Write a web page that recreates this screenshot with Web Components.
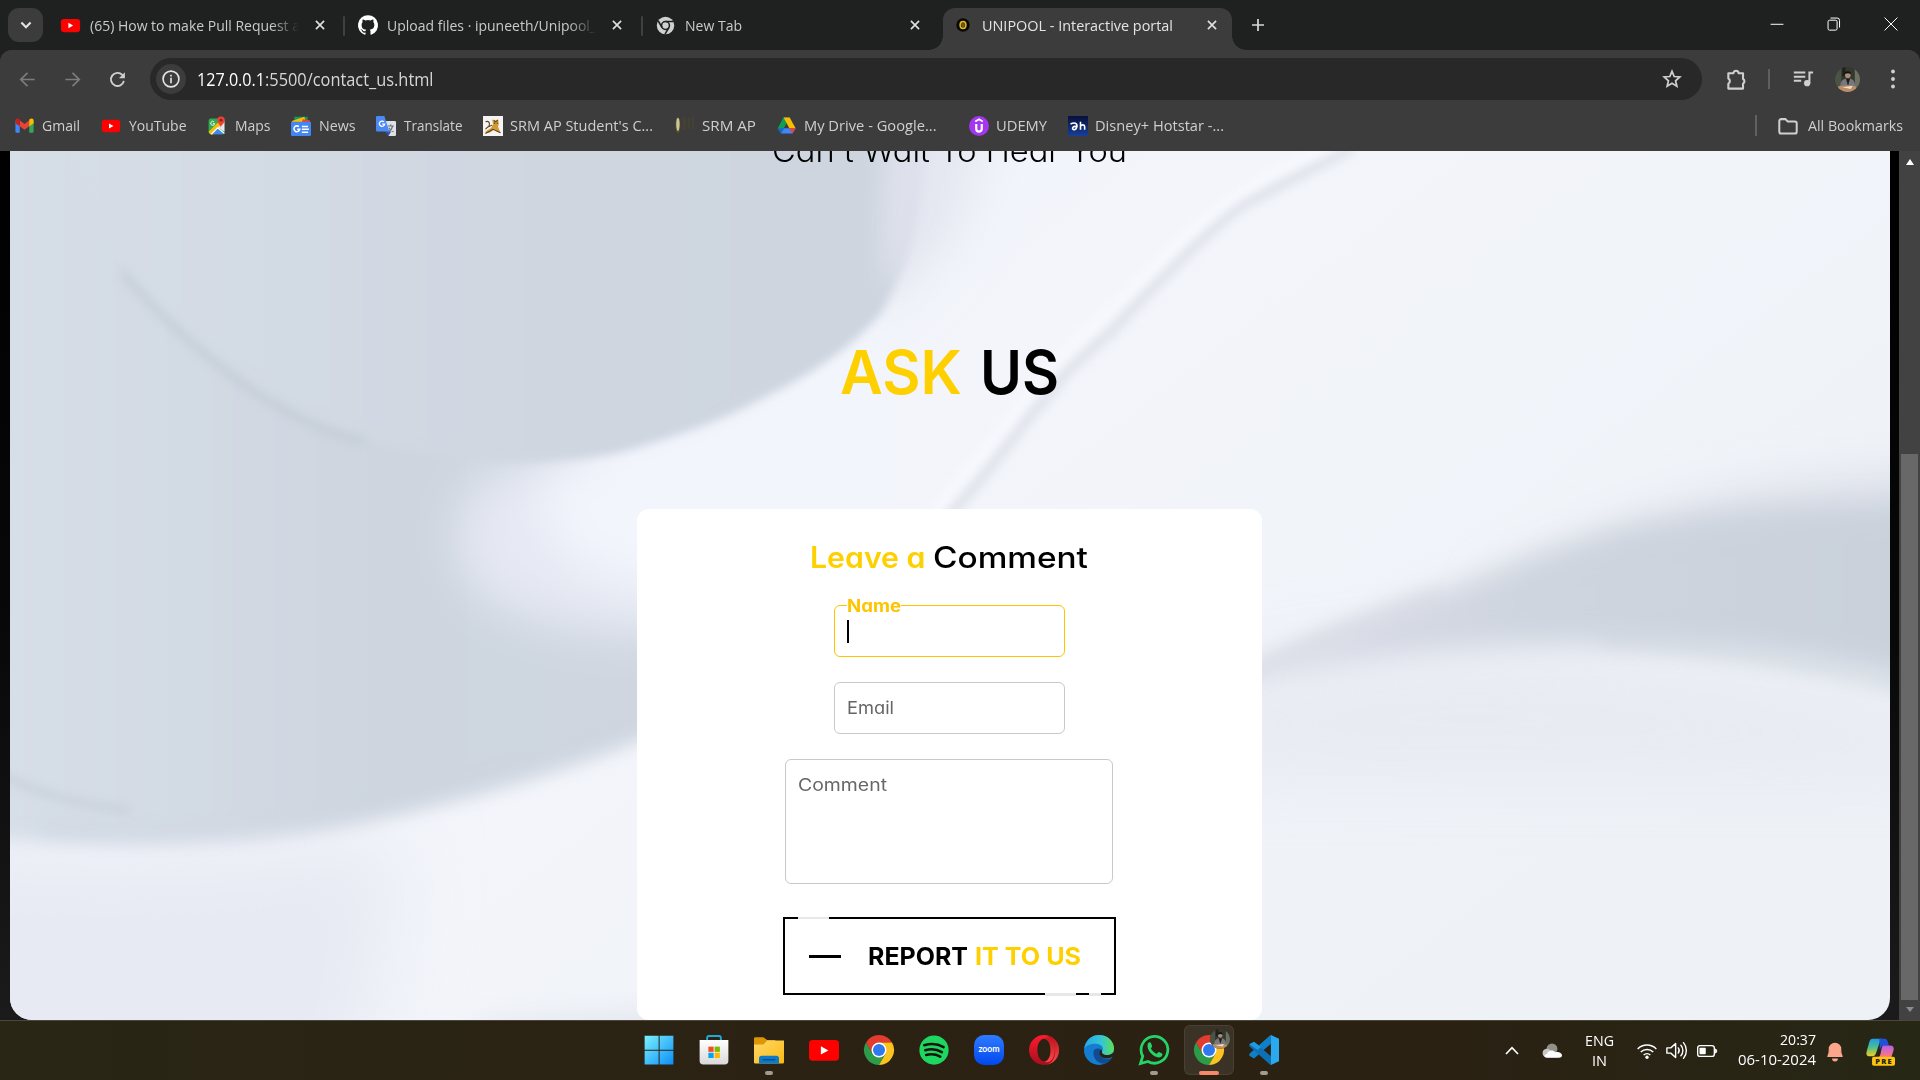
<!DOCTYPE html>
<html lang="en">
<head>
<meta charset="utf-8">
<title>UNIPOOL - Interactive portal</title>
<style>
html,body{margin:0;width:1920px;height:1080px;overflow:hidden;background:#000}
body{font-family:"Open Sans","Noto Sans",sans-serif}
</style>
</head>
<body>
<desktop-screen></desktop-screen>
<script>
const define=(name,html,init)=>customElements.define(name,class extends HTMLElement{
  connectedCallback(){
    if(this.shadowRoot)return;
    const r=this.attachShadow({mode:'open'});
    r.innerHTML=typeof html==='function'?html(this):html;
    if(init)init(this,r);
  }
});

/* Single line of text set to an exact advance width; cv11 is Inter's single-storey a */
define('fit-text',`<style>:host{display:block;white-space:nowrap;flex:none}span{display:inline-block;transform-origin:0 50%;font-feature-settings:"cv11"}</style><span><slot></slot></span>`,
(el,r)=>{
  const w=parseFloat(el.getAttribute('w'));el.style.width=w+'px';
  const s=r.querySelector('span'),n=s.getBoundingClientRect().width;
  if(n)s.style.transform='scaleX('+(w/n).toFixed(4)+')';
});

const ytIcon='<rect x="1" y="4.6" width="22" height="15" rx="3.6" fill="#f00"/><path d="M9.6 8.9v6.2l5.4-3.1z" fill="#fff"/>';
const chromeIcon='<path d="M12 6h10.4A12 12 0 0 0 1.6 6l5.2 9z" fill="#e33b2e"/><path d="M6.8 15 1.6 6A12 12 0 0 0 12 24l5.2-9z" fill="#2d9c4a"/><path d="M17.2 15 12 24A12 12 0 0 0 22.4 6H12z" fill="#fcc31e"/><circle cx="12" cy="12" r="6" fill="#fff"/><circle cx="12" cy="12" r="4.8" fill="#2f78ee"/>';
const portrait='<clipPath id="c"><circle cx="12" cy="12" r="12"/></clipPath><g clip-path="url(#c)"><rect width="24" height="24" fill="#34382f"/><path d="M0 0h6v24H0z" fill="#4b5346"/><path d="M19 0h5v24h-5z" fill="#6b7264"/><path d="M7 0h3v9H7z" fill="#1d211a"/><circle cx="12.3" cy="7.800" r="2.700" fill="#a98d76"/><path d="M9.200 7c0-4 6.300-4 6.300 0-2-1.300-4.500-1.300-6.300 0" fill="#12100d"/><path d="M5 19c0-6 3-8 7.500-8s6.500 2 7 8z" fill="#77777c"/><path d="m10.500 11 2 7 2-7z" fill="#1c1c1c"/><path d="M3 18.500c5-1 12-1 17 0l1 6H3z" fill="#b98d68"/><path d="M7 19.500 17 18l-2 3z" fill="#f0dcc4"/></g>';
const ICONS={
 youtube:ytIcon,chrome:chromeIcon,portrait,
 close:'<path d="m5 5 14 14M19 5 5 19" stroke="#dfe1e0" stroke-width="2.800"/>',
 plus:'<path d="M12 3v18M3 12h18" stroke="#d6d8d7" stroke-width="2.600"/>',
 down:'<path d="m6.500 9 5.500 5.600L17.500 9" stroke="#e3e3e3" stroke-width="2.600" fill="none"/>',
 github:'<path fill="#fff" d="M12 .3a12 12 0 0 0-3.800 23.400c.6.1.8-.3.8-.6v-2c-3.300.7-4-1.600-4-1.600-.6-1.400-1.400-1.800-1.400-1.800-1-.7.1-.7.1-.7 1.200 0 1.900 1.200 1.900 1.200 1 1.800 2.800 1.300 3.500 1 0-.8.4-1.300.7-1.600-2.700-.3-5.500-1.300-5.500-6 0-1.200.5-2.300 1.300-3.100-.2-.4-.6-1.600 0-3.200 0 0 1-.3 3.400 1.200a11.500 11.500 0 0 1 6 0c2.300-1.500 3.300-1.200 3.300-1.200.6 1.600.2 2.800 0 3.200.9.8 1.300 1.900 1.300 3.200 0 4.600-2.800 5.600-5.500 5.900.5.4.9 1 .9 2.200v3.300c0 .3.1.7.8.6A12 12 0 0 0 12 .3"/>',
 chromegray:'<circle cx="12" cy="12" r="11" fill="#cfd1d0"/><circle cx="12" cy="12" r="5" fill="none" stroke="#1f2120" stroke-width="2"/><path d="M12 7h10M7.700 14.600 2.700 6M16.300 14.600 11.400 23" stroke="#1f2120" stroke-width="2"/>',
 unipool:'<circle cx="12" cy="12" r="11.500" fill="#090907"/><ellipse cx="12" cy="12" rx="5" ry="6" fill="#3b320c" stroke="#e9b921" stroke-width="2.600"/><path d="M10.500 9v4c0 2 3 2 3 0V9" stroke="#d7ac27" fill="none"/>',
 back:'<path d="M21 12H4M12 3.500 3.500 12l8.500 8.500" stroke="#7c7c7c" stroke-width="2.200" fill="none"/>',
 forward:'<path d="M3 12h17M12 3.500l8.500 8.500-8.500 8.500" stroke="#7c7c7c" stroke-width="2.200" fill="none"/>',
 reload:'<path d="M19.300 13.600A7.500 7.500 0 1 1 17.500 6.800l1.800 2" stroke="#cfcfcf" stroke-width="2.200" fill="none"/><path d="M20.400 3.800v6.700h-6.700z" fill="#cfcfcf"/>',
 info:'<circle cx="12" cy="12" r="9.500" stroke="#e3e3e3" stroke-width="2" fill="none"/><path d="M12 10.500v6.500M12 6.800v2.200" stroke="#e3e3e3" stroke-width="2"/>',
 star:'<path d="m12 3.600 2.400 5.700 6.100.5-4.600 4.100 1.400 6L12 16.700l-5.300 3.200 1.400-6-4.600-4.100 6.100-.5z" stroke="#cfcfcf" stroke-width="1.900" fill="none"/>',
 ext:'<path d="M3.500 5.500h5.300a2.700 2.700 0 0 1 5.400 0h4.600v6a2.700 2.700 0 0 1 0 4.800v5.200H3.500v-5.200a3 3 0 0 0 0-5.300z" stroke="#cfcfcf" stroke-width="2.200" fill="none" stroke-linejoin="round"/>',
 music:'<path d="M2 5h12.500M2 9.500h12.500M2 14h8" stroke="#cfcfcf" stroke-width="2.200"/><circle cx="16.500" cy="16.500" r="3.400" fill="#cfcfcf"/><path d="M19 17V5h4" stroke="#cfcfcf" stroke-width="2.200" fill="none"/>',
 dots:'<circle cx="12" cy="3.800" r="2.100" fill="#cfcfcf"/><circle cx="12" cy="12" r="2.100" fill="#cfcfcf"/><circle cx="12" cy="20.200" r="2.100" fill="#cfcfcf"/>',
 min:'<path d="M1 12.500h22" stroke="#fff" stroke-width="1.700"/>',
 restore:'<rect x="1.800" y="5.500" width="15.500" height="17" rx="2.500" stroke="#fff" stroke-width="1.700" fill="none"/><path d="M6 1.800h11.500a4 4 0 0 1 4 4V18" stroke="#fff" stroke-width="1.700" fill="none"/>',
 winclose:'<path d="m1 1 22 22M23 1 1 23" stroke="#fff" stroke-width="1.700"/>',
 folder:'<path d="M2.500 6.500a2 2 0 0 1 2-2h4.700l2.500 2.700h7.800a2 2 0 0 1 2 2v9a2 2 0 0 1-2 2h-15a2 2 0 0 1-2-2z" stroke="#cfcfcf" stroke-width="2.200" fill="none"/>',
 gmail:'<path d="M.5 6v13.500A1.500 1.500 0 0 0 2 21h4V11z" fill="#4285f4"/><path d="M23.500 6v13.500A1.500 1.500 0 0 1 22 21h-4V11z" fill="#34a853"/><path d="M6 5.500 12 10l6-4.500V13l-6 4.500L6 13z" fill="#ea4335"/><path d="M.5 6c0-3 3-3.500 5.500-1.500V13L.5 9z" fill="#c5221f"/><path d="M23.500 6c0-3-3-3.500-5.500-1.500V13l5.500-4z" fill="#fbbc04"/>',
 maps:'<rect x="2" y="3" width="20" height="20" rx="3" fill="#34a853"/><path d="m2 20 16-16 4 4L8 23H4z" fill="#fbbc04"/><path d="m12.500 15.500 9 7.500H5z" fill="#4285f4"/><path d="m14 14.500 8-8V20z" fill="#e6e8ec"/><path d="m5.500 23 8-8 8.500 7" stroke="#fff" stroke-width="1.500" fill="none"/><path d="M9 7.500a2.500 2.500 0 1 0 .7 2H7.500" stroke="#fff" stroke-width="1.100" fill="none"/><path d="M17.500 15c0-4-4.500-5-4.500-9.500a4.500 4.500 0 0 1 9.500 0c0 4.500-5 5.500-5 9.500z" fill="#ea4335"/><circle cx="17.700" cy="5.300" r="1.800" fill="#8c1d18"/>',
 news:'<path d="M4 1h16v9H4z" fill="#0f9d58"/><path d="m1 6 15-5 3 10H2z" fill="#fbbc04"/><path d="M14 4 22.500 5v8H12z" fill="#ea4335"/><rect y="7" width="24" height="17" rx="1.500" fill="#4285f4"/><path d="M9.500 12.800a3.500 3.500 0 1 0 1 3.200H7.500" stroke="#fff" stroke-width="1.900" fill="none"/><path d="M13 12.500h7.500M13 16h8.500M13 19.500h7.500" stroke="#fff" stroke-width="1.800"/>',
 translate:'<path d="M9 6h13.500A1.500 1.500 0 0 1 24 7.500v15a1.500 1.500 0 0 1-1.500 1.500H15z" fill="#dfe1e5"/><path d="M14 12h7.500M17.700 10v2M20 12c-1 4-3 6-5 7M15.500 14c1 2 3 4 5.500 5" stroke="#667584" stroke-width="1.300" fill="none"/><path d="m10 17 5 7 3-5z" fill="#3451b5"/><path d="M1.500 0H10l6 18.500H1.500A1.500 1.500 0 0 1 0 17V1.500A1.500 1.500 0 0 1 1.500 0" fill="#4b8af5"/><path d="M9.500 7a3.200 3.200 0 1 0 .9 2.800H7.500" stroke="#fff" stroke-width="1.600" fill="none"/>',
 srm:'<rect width="24" height="24" fill="#f5f4f2"/><path d="M2 20c2-3 5-4 8-6l2-4-1-6 3 2 4-2 1 5-1 4 3 7-4-1-3-3-6 4z" fill="#d49b35"/><path d="M3 7c4-2 6 2 4 5M3 16c3-5 5-3 8-5M3 21l9-5 9 4M13 5l2 2 3-2" stroke="#594021" fill="none" stroke-width="1.300"/><circle cx="14" cy="8.500" r=".8" fill="#3b2a14"/><circle cx="17" cy="8.500" r=".8" fill="#3b2a14"/>',
 srmap:'<ellipse cx="3.500" cy="11" rx="3" ry="9.500" fill="#56502f"/><ellipse cx="3.500" cy="10" rx="2" ry="8" fill="#cdc797"/><path d="M9 1h4v16H9zM15 2h3v14h-3zM20 1h3v15h-3z" fill="#444232"/>',
 drive:'<path d="M8 2h8l-4.500 8L5 22 1 15.500z" fill="#0f9d58"/><path d="M8.300 2H16l7.500 13.500h-8z" fill="#fbbc04"/><path d="M8.800 15.500h14.700L19.500 22H5z" fill="#4285f4"/><path d="M1 15.500h7.800L5 22z" fill="#1967d2"/><path d="m15.500 15.500 8 0-4 6.500z" fill="#ea4335"/>',
 udemy:'<circle cx="12" cy="12" r="12" fill="#a435f0"/><path d="M7.500 6.700 12 4l4.500 2.700" stroke="#fff" stroke-width="2.200" fill="none"/><path d="M8.700 9.500v6.200c0 4 6.600 4 6.600 0V9.500" stroke="#fff" stroke-width="2.700" fill="none"/>',
 hotstar:'<linearGradient id="g" x2="0" y2="1"><stop stop-color="#07103a"/><stop offset="1" stop-color="#183f98"/></linearGradient><rect width="24" height="24" fill="url(#g)"/><path d="M3 9.500c7-3 9 1 7 5s-6 1-4-1 5 0 5 0M15 7v9.500M15 12.500c1-2.500 5-2.500 5 .5v3.500" stroke="#fff" stroke-width="1.900" fill="none"/>',
 windows:'<linearGradient id="g" x1="0" y1="0" x2="24" y2="24" gradientUnits="userSpaceOnUse"><stop stop-color="#7df3fd"/><stop offset="1" stop-color="#0a8cf7"/></linearGradient><path d="M.5.5h11.200v11.200H.5zM12.500.5h11v11.200h-11zM.5 12.500h11.200v11H.5zM12.500 12.500h11v11h-11z" fill="url(#g)"/>',
 store:'<path d="M6.500 5V2.500C6.500 1.200 7 .8 8 .8h8c1 0 1.500.4 1.500 1.700V5" stroke="#21a9dd" stroke-width="1.500" fill="none"/><linearGradient id="g" x2="0" y2="1"><stop stop-color="#fff"/><stop offset="1" stop-color="#d9d9db"/></linearGradient><path d="M.5 4h23v16.500a3 3 0 0 1-3 3h-17a3 3 0 0 1-3-3z" fill="url(#g)"/><path d="M7.500 9.300h4.200v4.200H7.500z" fill="#f25022"/><path d="M12.500 9.300h4.200v4.200h-4.200z" fill="#7fba00"/><path d="M7.500 14.200h4.200v4.200H7.500z" fill="#00a4ef"/><path d="M12.500 14.200h4.200v4.200h-4.200z" fill="#ffb900"/>',
 explorer:'<linearGradient id="g" x2="1" y2="1"><stop stop-color="#ffd96b"/><stop offset="1" stop-color="#fbb90f"/></linearGradient><path d="M0 2.800a1 1 0 0 1 1-1h6.500L10.500 4H17v4H0z" fill="#dc9606"/><path d="M0 7.500h7.500L10.500 4.300H24V21.800a1 1 0 0 1-1 1H1a1 1 0 0 1-1-1z" fill="url(#g)"/><path d="M4 22.800v-4a2.200 2.200 0 0 1 2.200-2.200h11.600a2.200 2.200 0 0 1 2.200 2.200v4z" fill="#0c79cb"/><path d="M7 19.800h10" stroke="#06498a" stroke-width="1"/>',
 youtube2:'<rect x="0" y="4" width="24" height="16.500" rx="3" fill="#f00"/><path d="M9.500 8.900v6.700l6-3.300z" fill="#fff"/>',
 spotify:'<circle cx="12" cy="12" r="11.700" fill="#1ed760"/><path d="M4.200 8.200c5-1.500 11.200-1 15.500 1.500M5 12.200c4.500-1.300 9.500-.7 13.300 1.500M5.700 16c4-1 8-.5 11.300 1.300" stroke="#17130c" stroke-width="2" stroke-linecap="round" fill="none"/>',
 zoom:'<linearGradient id="g" x2="0" y2="1"><stop stop-color="#2f7bff"/><stop offset="1" stop-color="#0048ef"/></linearGradient><rect width="24" height="24" rx="8" fill="url(#g)"/><text x="12" y="13.900" text-anchor="middle" font-family="Lato" font-weight="700" font-size="6.800" textLength="17" lengthAdjust="spacingAndGlyphs" fill="#fff">zoom</text>',
 opera:'<linearGradient id="g" x2="0" y2="1"><stop stop-color="#ff1b2d"/><stop offset="1" stop-color="#a70e1c"/></linearGradient><linearGradient id="h" x2="0" y2="1"><stop stop-color="#b5101c"/><stop offset="1" stop-color="#ff5050"/></linearGradient><path fill="url(#g)" fill-rule="evenodd" d="M12 0a12 12 0 1 0 0 24 12 12 0 0 0 0-24m0 3c3 0 5.300 4 5.300 9s-2.300 9-5.300 9-5.300-4-5.300-9S9 3 12 3"/><path d="M12.500 2.500C16 1 20.500 4.500 20.500 12S16 23 12.500 21.500c3-.5 4.800-4.500 4.800-9.500s-1.800-9-4.800-9.500M20 3a12 12 0 0 1 0 18c-1.500 1.500-4 2.500-6 2.500 6-1 7-7 7-11.500S19.500 4 14 .5c2 0 4.500 1 6 2.500" fill="url(#h)"/>',
 edge:'<linearGradient id="g" x2="1"><stop stop-color="#2aa7e6"/><stop offset=".6" stop-color="#35c7d0"/><stop offset="1" stop-color="#61e052"/></linearGradient><circle cx="12" cy="12" r="12" fill="#157cd0"/><path d="M.2 11C1.500 3.500 6.500 0 12 0c7 0 12 5 12 10.500 0 4-3 5.500-6 5.500-3.500 0-4.500-1.600-3.500-3 2-3-1-6-5-6C5 7 1.500 8.500.2 11" fill="url(#g)"/><path d="M7.500 14c0 5.500 4 9 9 9 2.500-.8 4.500-2.800 5.600-4.600-4.500 2-9.100 0-9.500-3.900-.1-2 1-2.500 1.200-3-3-1.500-6.300-.5-6.300 2.500" fill="#114b91"/><path d="M13.800 11.500c-1.500 1-2.200 3-.3 5.500 1.800 2 5.800 2.200 9.300.3l1.700-1V13l-1.500 1.500C20.500 16.500 16.500 16.300 15 15c-.8-.8-.9-1.400-.5-2z" fill="#2a2113"/>',
 whatsapp:'<path d="M1.200 22.800 3 17A10.700 10.700 0 1 1 7.200 21.200z" fill="none" stroke="#25d366" stroke-width="2.200"/><path d="M7 7c1-1.800 2.200-1.500 2.700-.2l.8 1.900c.3 1-1.300 1.500-.9 2.300 1 1.800 2.300 3 4.300 3.900.8.300 1.400-1.600 2.200-1.300l2.300 1.100c.8.500.2 2-.7 2.700-3.700 2.400-12.400-4.200-10.700-10.400" fill="#25d366"/>',
 vscode:'<path d="M17.500 0v7L4 18.700.3 16.600V15L17 .2z" fill="#0f80c8"/><path d="M17.500 24v-7L4 5.300.3 7.400V9L17 23.800z" fill="#0d6fb4"/><path d="m.3 7.400 3.700-2 5.500 4.200L7 12z" fill="#1f9ae0"/><path d="M17.500 0 24 3v18l-6.500 3z" fill="#2aa9ef"/>',
 caret:'<path d="m4 16 8-8.500 8 8.500" stroke="#fff" stroke-width="2.200" fill="none"/>',
 cloud:'<circle cx="12" cy="9.500" r="6.500" fill="#919089"/><path d="M5 19.500a5 5 0 0 1-.5-9.800c3-1 5 .3 6.500 3l8 6.800z" fill="#c6c6c3"/><path d="M6 20c-4 0-4-4 0-4.500 1-4.500 7-5.500 10-2 4-.7 8 1 8 4 0 2-2 2.500-3.500 2.500z" fill="#fff"/>',
 wifi:'<path d="M.8 9.500a16 16 0 0 1 22.400 0M4.500 13.200a10.700 10.700 0 0 1 15 0M8 16.800a5.800 5.800 0 0 1 8 0" stroke="#fff" stroke-width="1.800" fill="none"/><circle cx="12" cy="19.500" r="2" fill="#fff"/>',
 speaker:'<path d="M1 9h4.500l5.500-5v16l-5.500-5H1z" stroke="#fff" stroke-width="1.600" fill="none" stroke-linejoin="round"/><path d="M14 9a5 5 0 0 1 0 6M17 6a9 9 0 0 1 0 12M20 3a14 14 0 0 1 0 18" stroke="#fff" stroke-width="1.600" fill="none" stroke-linecap="round"/>',
 battery:'<rect x=".8" y="5.500" width="20" height="13" rx="3" stroke="#fff" stroke-width="1.600" fill="none"/><rect x="3" y="8" width="7.500" height="8" rx="1" fill="#fff"/><path d="M22 9.500c2.300.3 2.300 4.700 0 5z" fill="#fff" stroke="#fff"/>',
 bell:'<path d="M3.500 18.500c2-3 1.700-6 1.700-9a6.800 6.800 0 0 1 13.600 0c0 3-.3 6 1.700 9z" fill="#fca68b" stroke="#fca68b" stroke-width="1.500" stroke-linejoin="round"/><path d="M8.500 21h7a3.500 3.500 0 0 1-7 0" fill="#fca68b"/>',
 copilot:'<linearGradient id="a" x2="0" y2="1"><stop stop-color="#1d9bea"/><stop offset=".5" stop-color="#4fbf8c"/><stop offset="1" stop-color="#f5cf21"/></linearGradient><linearGradient id="b" x2="0" y2="1"><stop stop-color="#b85cf5"/><stop offset="1" stop-color="#ff7b72"/></linearGradient><path d="M5.500 1.500h8c-2 1.500-2.500 4-4 8.500s-2 6-4.500 6H3C0 16 0 13.500.8 11l2-7c.5-1.500 1.200-2.500 2.700-2.500" fill="url(#a)"/><path d="M11 1.500h4.500c2 0 2.500 2 3.500 5.500h-4c-2 0-2.500 1-3.500 4z" fill="#1f52d8"/><path d="M14.500 7H20c3 0 3.500 2.500 2.500 5l-1.500 4.500h-11c2 0 2-3 2.700-6 .5-2 .8-3.500 1.800-3.500" fill="url(#b)"/><rect x="5" y="16.300" width="19" height="7.500" rx="1.500" fill="#fdc50c"/><text x="14.500" y="22.300" text-anchor="middle" font-family="Open Sans" font-weight="800" font-size="6.200" textLength="13.500" fill="#222">PRE</text>'
};
define('app-icon',el=>{
  const s=el.getAttribute('size')||20;
  return `<style>:host{display:block;flex:none;width:${s}px;height:${s}px}svg{display:block;overflow:visible}</style><svg width="${s}" height="${s}" viewBox="0 0 24 24" fill="none">${ICONS[el.getAttribute('name')]}</svg>`;
});

define('browser-tab',`<style>
:host{display:flex;align-items:center;box-sizing:border-box;width:297.5px;height:42px;padding-left:12px;flex:none;position:relative;color:#c9cac9;font-size:15px;line-height:34px}
.ic{width:21px;display:flex;justify-content:center;margin-right:9px}
.t{width:211px;overflow:hidden;margin-right:12px}
:host([fade]) .t{-webkit-mask-image:linear-gradient(90deg,#000 86%,transparent 99%)}
:host([sep])::after{content:"";position:absolute;right:0;top:8px;width:2px;height:20px;background:#3f4040;border-radius:1px}
:host([active]) {color:#e4e4e4}
.bg{display:none}
:host([active]) .bg{display:block;position:absolute;left:3px;right:5.500px;top:0;bottom:0;background:#3c3c3c;border-radius:12px 12px 0 0}
:host([active]) .bg::before,:host([active]) .bg::after{content:"";position:absolute;bottom:0;width:14px;height:14px}
.bg::before{left:-14px;background:radial-gradient(circle at 0 0,transparent 13.500px,#3c3c3c 14px)}
.bg::after{right:-14px;background:radial-gradient(circle at 100% 0,transparent 13.500px,#3c3c3c 14px)}
.ic,.t,app-icon{position:relative;top:-4px}
</style><div class="bg"></div><div class="ic"><slot name="icon"></slot></div><div class="t"><slot></slot></div><app-icon name="close" size="14"></app-icon>`);

define('tab-strip',`<style>
:host{display:flex;height:50px;background:#1f2120;padding-top:8px;box-sizing:border-box}
.search{width:35px;height:34px;border-radius:11px;background:#3c3c3c;margin:0 4.500px 0 8px;display:flex;align-items:center;justify-content:center}
.plus{margin:9px 0 0 12px}
.win{margin-left:auto;display:flex;gap:43px;padding:9px 22px 0 0}
</style>
<div class="search"><app-icon name="down" size="20"></app-icon></div>
<browser-tab fade sep><app-icon slot="icon" name="youtube" size="21"></app-icon><fit-text w="210">(65) How to make Pull Request a</fit-text></browser-tab>
<browser-tab fade sep><app-icon slot="icon" name="github" size="20"></app-icon><fit-text w="209">Upload files · ipuneeth/Unipool_</fit-text></browser-tab>
<browser-tab><app-icon slot="icon" name="chromegray" size="19"></app-icon><fit-text w="57">New Tab</fit-text></browser-tab>
<browser-tab active><app-icon slot="icon" name="unipool" size="14"></app-icon><fit-text w="191">UNIPOOL - Interactive portal</fit-text></browser-tab>
<app-icon class="plus" name="plus" size="16"></app-icon>
<div class="win"><app-icon name="min" size="14"></app-icon><app-icon name="restore" size="14"></app-icon><app-icon name="winclose" size="14"></app-icon></div>`);

define('address-bar',`<style>
:host{display:flex;align-items:center;height:58px;background:#3c3c3c;box-sizing:border-box;padding-left:18px}
.nav{display:flex;align-items:center;gap:25.500px;width:132px}
.omni{width:1552px;height:42px;border-radius:21px;background:#282828;display:flex;align-items:center;box-sizing:border-box;padding:0 19px 0 6px;font-size:18px;color:#d6d6d6}
.info{width:30px;height:30px;border-radius:50%;background:#3c3c3c;display:flex;align-items:center;justify-content:center;margin-right:11px}
.omni app-icon.star{margin-left:auto}
.host{color:#fff}
.ext{margin-left:23px}.sep{width:2px;height:20px;background:#5f5f5f;margin:0 22px 0 20px}
.pic{margin:0 21.500px 0 21px}
</style>
<div class="nav"><app-icon name="back" size="19"></app-icon><app-icon name="forward" size="19"></app-icon><app-icon name="reload" size="21"></app-icon></div>
<div class="omni"><div class="info"><app-icon name="info" size="20"></app-icon></div><fit-text class="host" w="68">127.0.0.1</fit-text><fit-text w="168.500">:5500/contact_us.html</fit-text><app-icon class="star" name="star" size="22"></app-icon></div>
<app-icon class="ext" name="ext" size="23"></app-icon><div class="sep"></div><app-icon name="music" size="22"></app-icon><app-icon class="pic" name="portrait" size="25"></app-icon><app-icon name="dots" size="22"></app-icon>`);

define('bookmark-item',el=>`<style>
:host{display:flex;align-items:center;flex:none;width:${el.getAttribute('span')}px}
app-icon{margin-right:${el.getAttribute('gap')||7}px}
fit-text{padding-bottom:2px}
</style><app-icon name="${el.getAttribute('icon')}" size="${el.getAttribute('size')||20}"></app-icon><fit-text w="${el.getAttribute('w')}"><slot></slot></fit-text>`);

define('bookmark-bar',`<style>
:host{display:flex;height:43px;padding:0 0 8px 15px;box-sizing:border-box;align-items:center;background:#3c3c3c;color:#cfcfcf;font-size:15px;line-height:24px}
.sep{width:2px;height:21px;background:#616161;margin:0 20px 0 auto}
.all{margin-right:17px}
</style>
<bookmark-item icon="gmail" size="19" gap="8" w="38" span="86">Gmail</bookmark-item>
<bookmark-item icon="youtube" gap="7.500" w="57.500" span="106">YouTube</bookmark-item>
<bookmark-item icon="maps" size="19" gap="8.500" w="35.500" span="84">Maps</bookmark-item>
<bookmark-item icon="news" gap="8" w="36.500" span="85">News</bookmark-item>
<bookmark-item icon="translate" gap="7.500" w="58.500" span="107">Translate</bookmark-item>
<bookmark-item icon="srm" w="143" span="192">SRM AP Student's C...</bookmark-item>
<bookmark-item icon="srmap" w="54" span="102">SRM AP</bookmark-item>
<bookmark-item icon="drive" size="19" gap="7.500" w="132.500" span="192">My Drive - Google...</bookmark-item>
<bookmark-item icon="udemy" w="51" span="99">UDEMY</bookmark-item>
<bookmark-item icon="hotstar" w="129" span="160">Disney+ Hotstar -...</bookmark-item>
<div class="sep"></div>
<bookmark-item class="all" icon="folder" size="22" gap="9" w="95" span="126">All Bookmarks</bookmark-item>`);

/* Soft folded-paper backdrop */
define('wave-backdrop',`<style>:host{display:block;width:1880px;height:869px}svg{display:block}</style>
<svg width="1880" height="869" viewBox="10 151 1880 869">
<defs>
<filter id="f4" x="-20%" y="-20%" width="140%" height="140%"><feGaussianBlur stdDeviation="5"/></filter>
<filter id="f8" x="-20%" y="-20%" width="140%" height="140%"><feGaussianBlur stdDeviation="9"/></filter>
<filter id="f14" x="-30%" y="-30%" width="160%" height="160%"><feGaussianBlur stdDeviation="14"/></filter>
<filter id="f22" x="-50%" y="-50%" width="200%" height="200%"><feGaussianBlur stdDeviation="24"/></filter>
<filter id="f40" x="-60%" y="-60%" width="220%" height="220%"><feGaussianBlur stdDeviation="40"/></filter>
<linearGradient id="l1" gradientUnits="userSpaceOnUse" x1="10" y1="0" x2="930" y2="0"><stop stop-color="#d6dee7"/><stop offset=".5" stop-color="#d0d7e1"/><stop offset="1" stop-color="#cdd4de"/></linearGradient>
<linearGradient id="l2" gradientUnits="userSpaceOnUse" x1="10" y1="0" x2="640" y2="0"><stop stop-color="#d6dee7"/><stop offset=".6" stop-color="#ced5df"/><stop offset="1" stop-color="#cfd6e0"/></linearGradient>
<linearGradient id="w" x1="0" x2="1"><stop stop-color="#dcdde8"/><stop offset=".4" stop-color="#cfd5df"/><stop offset="1" stop-color="#c8d0da"/></linearGradient>
<linearGradient id="bg" x1="0" y1="0" x2="1" y2=".6"><stop stop-color="#eef1fa"/><stop offset=".5" stop-color="#f3f5fb"/><stop offset="1" stop-color="#eef2f7"/></linearGradient>
</defs>
<rect x="10" y="151" width="1880" height="869" fill="url(#bg)"/>
<path d="M-100 850C100 880 250 860 400 840L350 1100-100 1100z" fill="#e7e9f3" filter="url(#f40)"/>
<path d="M480 1022 700 1008 700 1060 480 1060z" fill="#e4e6ee" filter="url(#f14)"/>
<path d="M880 60 1010 60 960 230 850 350 880 300z" fill="#e5e8f1" filter="url(#f22)"/>
<path d="M-60 60H400L560 455 680 520 680 720C600 757 480 795 367 819 270 840 120 850-60 836z" fill="url(#l2)" filter="url(#f8)"/>
<path d="M490 475 800 380 800 635C680 640 540 635 490 600 445 570 450 500 490 475z" fill="#e6e9f3" filter="url(#f22)"/>
<path d="M560 468 800 400 800 590C700 600 620 590 575 560 540 530 530 495 560 468z" fill="#f3f5fd" filter="url(#f22)"/>
<path d="M600 462 700 430 880 320 880 530 640 530z" fill="#f3f5fd" filter="url(#f14)"/>
<path d="M60 60H925C925 200 915 255 882 312 850 350 810 375 765 397 720 422 680 434 643 446 600 460 560 462 527 462 490 462 455 458 420 452 340 438 280 405 233 370 180 330 140 295 115 255 80 200 60 130 60 60z" fill="url(#l1)" filter="url(#f4)"/>
<path d="M890 40h50C940 190 925 250 890 295 872 240 890 150 890 40z" fill="#e3e5ef" opacity=".8" filter="url(#f14)"/>
<path d="M122 272C170 330 230 375 260 396 300 420 330 435 365 441" stroke="#bec7d1" stroke-width="8" opacity=".6" fill="none" filter="url(#f4)"/>
<path d="M0 774C40 795 80 805 130 810" stroke="#c2cbd5" stroke-width="8" opacity=".6" fill="none" filter="url(#f4)"/>
<path d="M40 828C150 842 270 838 367 815 450 798 560 768 650 728" stroke="#c9d0db" stroke-width="12" opacity=".45" fill="none" filter="url(#f8)"/>
<path d="M1352 148C1300 175 1260 195 1236 209 1205 235 1190 250 1174 266 1150 290 1130 310 1113 330 1090 350 1078 360 1064 375 1045 400 1030 415 1021 427 1000 455 985 475 945 520" stroke="#e2e4ed" stroke-width="12" fill="none" filter="url(#f4)"/>
<path d="M1335 144C1270 170 1220 200 1160 262L1050 368 1006 425 932 515" stroke="#f9faff" stroke-width="9" opacity=".8" fill="none" filter="url(#f4)"/>
<path d="M1200 690C1340 650 1500 650 1640 665 1760 680 1850 700 1980 735L1980 780 1200 780z" fill="#e5e7f0" opacity=".75" filter="url(#f40)"/>
<path d="M1480 600C1640 500 1780 482 1980 470L1980 580z" fill="#d9dde6" filter="url(#f22)"/>
<path d="M1210 690C1290 652 1350 625 1413 602 1480 575 1540 552 1634 527 1730 510 1810 507 1980 505L1980 700C1880 668 1760 648 1640 645 1500 640 1350 655 1210 690z" fill="url(#w)" filter="url(#f14)"/>
<path d="M1600 640C1720 648 1820 665 1920 692" stroke="#c0c9d3" stroke-width="12" opacity=".35" fill="none" filter="url(#f8)"/>
<path d="M1230 684C1310 640 1370 620 1440 595" stroke="#d2d5df" stroke-width="12" opacity=".7" fill="none" filter="url(#f8)"/>
</svg>`);

define('form-field',el=>`<style>
:host{display:block;box-sizing:border-box;position:relative;border:1px solid #c9c9c9;border-radius:6px;padding:11.500px 0 0 12px;color:#666;font:400 17px/26px Inter,sans-serif;background:#fff}
:host([focused]){border-color:#ffc400;padding-top:12.500px}
.legend{position:absolute;left:12px;top:-13px;font-weight:700;color:#ffc400;}
.legend::before{content:"";position:absolute;left:0;right:0;top:12px;height:2px;background:#fff}
.legend fit-text{position:relative}
.caret{width:2px;height:23px;background:#000;margin-top:1px}
</style>${el.hasAttribute('focused')?'<div class="legend"><fit-text w="54"><slot></slot></fit-text></div><div class="caret"></div>':`<fit-text w="${el.getAttribute('w')}"><slot></slot></fit-text>`}`);

define('report-button',`<style>
:host{display:flex;align-items:center;box-sizing:border-box;width:333px;height:78px;border:2px solid #000;position:relative;font:700 24.500px/40px Inter,sans-serif;padding-left:24px;color:#000}
.dash{width:32px;height:3px;background:#000;margin-right:27px}
.y{color:#ffd000;margin-left:7px}
i{position:absolute;height:2px;background:#e8e8e8}
.a{left:13px;top:-2px;width:31px}.b{left:260px;bottom:-3px;width:31px;height:3px}.c{left:304px;bottom:-3px;width:12px;height:3px}
</style><div class="dash"></div><fit-text w="100">REPORT</fit-text><fit-text class="y" w="106">IT TO US</fit-text><i class="a"></i><i class="b"></i><i class="c"></i>`);

define('comment-card',`<style>
:host{display:flex;flex-direction:column;align-items:center;box-sizing:border-box;width:625px;height:511px;border-radius:12px;background:#fff;padding-top:26px}
.h{display:flex;gap:8px;font:500 29.500px/44px Inter,sans-serif;color:#000}
.h .y{color:#ffd000;font-weight:600}
.s{width:231px;height:52px;margin-top:25px}.s.first{margin-top:26px}
.l{width:328px;height:125px;margin-top:25px}
report-button{margin-top:33px}
</style>
<div class="h"><fit-text class="y" w="115.500">Leave a</fit-text><fit-text w="155">Comment</fit-text></div>
<form-field class="s first" focused>Name</form-field>
<form-field class="s" w="47">Email</form-field>
<form-field class="l" w="89">Comment</form-field>
<report-button></report-button>`);

define('page-view',`<style>
:host{display:flex;height:869px;background:linear-gradient(#000,#080808 55%,#1b1b1b);overflow:hidden}
main{display:grid;width:1880px;height:869px;margin-left:10px;border-radius:0 0 22px 22px;overflow:hidden}
main>*{grid-area:1/1}
.col{display:flex;flex-direction:column;align-items:center;position:relative;padding-right:2px}
.sub{margin-top:-20px;font:300 31px/40px Inter,sans-serif;color:#000}
.ask{display:flex;gap:18px;margin-top:156px;font:600 61px/90px Inter,sans-serif;color:#000}
.ask .y{color:#ffd000}
comment-card{margin-top:92px}
.bar{margin-left:9px;width:21px;background:#424242;display:flex;flex-direction:column;align-items:center;box-sizing:border-box;padding:8px 0 0}
.up,.dn{width:0;border:4.500px solid transparent;border-top:0;border-bottom:6px solid #fff}
.dn{border-top:5px solid #8b8b8b;border-bottom:0;margin-top:7px}
.thumb{width:17px;height:546px;background:#686868;margin:289px 0 0}
</style>
<main><wave-backdrop></wave-backdrop><div class="col">
<fit-text class="sub" w="355">Can't Wait To Hear You</fit-text>
<div class="ask"><fit-text class="y" w="122">ASK</fit-text><fit-text w="79">US</fit-text></div>
<comment-card></comment-card></div></main>
<div class="bar"><div class="up"></div><div class="thumb"></div><div class="dn"></div></div>`);

define('task-app',el=>`<style>
:host{display:flex;flex-direction:column;align-items:center;width:55px;height:50px;padding-top:10px;box-sizing:border-box;position:relative;flex:none}
:host([active])::before{content:"";position:absolute;inset:0 2.500px;background:rgba(255,255,255,.08);border:1px solid rgba(255,255,255,.07);border-radius:6px;box-sizing:border-box}
.i{width:8px;height:4px;border-radius:2px;background:#a09b93;margin-top:5.500px;display:none;position:relative}
:host([running]) .i{display:block}
:host([active]) .i{display:block;width:20px;background:#f9886b}
app-icon{position:relative}
app-icon.badge{position:absolute;left:28.500px;top:4px}
</style><app-icon name="${el.getAttribute('icon')}" size="30"></app-icon>${el.hasAttribute('active')?'<app-icon class="badge" name="portrait" size="20"></app-icon>':''}<div class="i"></div>`);

define('task-bar',`<style>
:host{display:grid;grid-template-columns:630px 660px 630px;height:60px;box-sizing:border-box;border-top:1px solid #4b473b;background:linear-gradient(90deg,#292616,#2b2213 40%,#2a2113 75%,#272716);color:#fff}
.apps{grid-column:2;display:flex;padding:4px 0 0 1px}
.tray{display:flex;align-items:center;font-size:15px;line-height:20px;justify-content:flex-end;height:59px}
.lang,.clock{display:flex;flex-direction:column}
.lang{align-items:center;margin:0 23.500px 2px 24px;width:28px}
.clock{align-items:flex-end;margin:0 9px 3px 21px}
</style>
<div class="apps">
<task-app icon="windows"></task-app><task-app icon="store"></task-app><task-app icon="explorer" running></task-app><task-app icon="youtube2"></task-app><task-app icon="chrome"></task-app><task-app icon="spotify"></task-app><task-app icon="zoom"></task-app><task-app icon="opera"></task-app><task-app icon="edge"></task-app><task-app icon="whatsapp" running></task-app><task-app icon="chrome" active></task-app><task-app icon="vscode" running></task-app>
</div>
<div class="tray">
<app-icon name="caret" size="18"></app-icon><app-icon name="cloud" size="20" style="margin-left:21px"></app-icon>
<div class="lang"><fit-text w="29">ENG</fit-text><fit-text w="15">IN</fit-text></div>
<app-icon name="wifi" size="20"></app-icon><app-icon name="speaker" size="21" style="margin-left:9px"></app-icon><app-icon name="battery" size="20" style="margin-left:10px"></app-icon>
<div class="clock"><fit-text w="36">20:37</fit-text><fit-text w="78">06-10-2024</fit-text></div>
<app-icon name="bell" size="20"></app-icon><app-icon name="copilot" size="29" style="margin:2px 25px 0 21px"></app-icon>
</div>`);

define('desktop-screen',`<style>:host{display:flex;flex-direction:column;width:1920px;height:1080px;background:#1f2120}
.chrome{background:#3c3c3c;border-radius:12px 12px 0 0;overflow:hidden}</style>
<tab-strip></tab-strip><div class="chrome"><address-bar></address-bar><bookmark-bar></bookmark-bar></div><page-view></page-view><task-bar></task-bar>`);
</script>
</body>
</html>
